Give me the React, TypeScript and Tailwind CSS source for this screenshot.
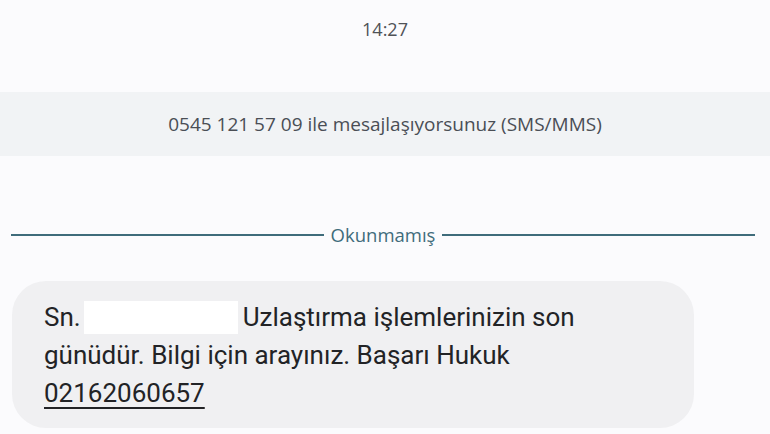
import React from 'react';

const font = { fontFamily: 'Roboto, "Noto Sans", sans-serif' };
const small = { fontFamily: '"Open Sans", Roboto, sans-serif' };

const App: React.FC = () => {
    return (
        <div className="w-[770px] h-[434px] overflow-hidden bg-[#fbfbfd] flex flex-col" style={font}>
            <div className="h-[58px] flex items-center justify-center text-[18px] text-[#4f5257]" style={small}>
                14:27
            </div>

            <div className="mt-[34px] h-[64px] bg-[#f1f3f5] flex items-center justify-center text-[19px] text-[#4a4e55]" style={small}>
                0545 121 57 09 ile mesajlaşıyorsunuz (SMS/MMS)
            </div>

            <div className="mt-[67px] h-[24px] flex items-center pl-[11px] pr-[15px] gap-[7px]">
                <div className="flex-1 h-[2px] bg-[#3f6c7b]"></div>
                <span className="text-[18.5px] text-[#3f6c7b]" style={small}>Okunmamış</span>
                <div className="flex-1 h-[2px] bg-[#3f6c7b]"></div>
            </div>

            <div className="mt-[34px] ml-[12px] w-[682px] h-[147px] rounded-[34px] bg-[#f0f0f2] pl-[32px] pt-[17px] text-[26px] leading-[38px] text-[#222326]">
                <div className="flex items-center">
                    <span>Sn.</span>
                    <span className="inline-block w-[154px] h-[33px] bg-white ml-[3px] mr-[5px]"></span>
                    <span>Uzlaştırma işlemlerinizin son</span>
                </div>
                <div>günüdür. Bilgi için arayınız. Başarı Hukuk</div>
                <div>
                    <span className="underline decoration-[2px] underline-offset-[5px]">02162060657</span>
                </div>
            </div>
        </div>
    );
};

export default App;
